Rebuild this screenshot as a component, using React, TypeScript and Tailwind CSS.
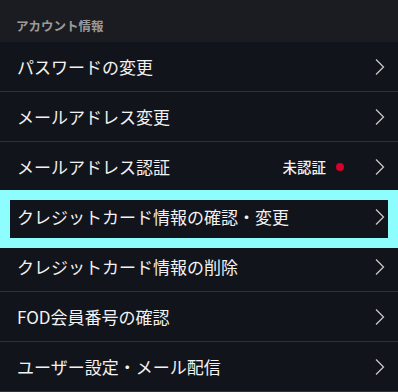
import React from 'react';

interface MenuItem {
  label: string;
  badge?: string;
  focused?: boolean;
}

const items: MenuItem[] = [
  { label: 'パスワードの変更' },
  { label: 'メールアドレス変更' },
  { label: 'メールアドレス認証', badge: '未認証' },
  { label: 'クレジットカード情報の確認・変更', focused: true },
  { label: 'クレジットカード情報の削除' },
  { label: 'FOD会員番号の確認' },
  { label: 'ユーザー設定・メール配信' },
];

const Chevron = () => (
  <svg width="10" height="16" viewBox="0 0 10 16" fill="none" className="shrink-0">
    <path d="M1 0.5 L8.5 8 L1 15.5" stroke="#c8c8c8" strokeWidth="1.3" />
  </svg>
);

const App: React.FC = () => {
  return (
    <div
      className="w-[398px] h-[392px] overflow-hidden bg-[#12141b] text-[#f2f2f2]"
      style={{ fontFamily: '"Noto Sans CJK JP", "Noto Sans", sans-serif' }}
    >
      <div className="h-[42px] bg-[#1b1c21] flex items-center px-4">
        <span className="text-[12.5px] font-bold text-[#9a9a9c] pt-[10px]">アカウント情報</span>
      </div>
      {items.map((item) => (
        <div
          key={item.label}
          className="relative h-[50px] flex items-center pl-[17px] pr-[13px] border-b border-[#303136]"
        >
          {item.focused && (
            <div className="absolute left-0 right-0 top-[-2px] bottom-[-7px] border-[10px] border-[#8efdfd] z-0" />
          )}
          <span className="relative text-[17px] leading-none flex-1 whitespace-nowrap">{item.label}</span>
          {item.badge && (
            <div className="relative flex items-center mr-[31px]">
              <span className="text-[14.5px] font-medium">{item.badge}</span>
              <span className="ml-[10px] w-2 h-2 rounded-full bg-[#d5002c]" />
            </div>
          )}
          <span className="relative">
            <Chevron />
          </span>
        </div>
      ))}
    </div>
  );
};

export default App;
